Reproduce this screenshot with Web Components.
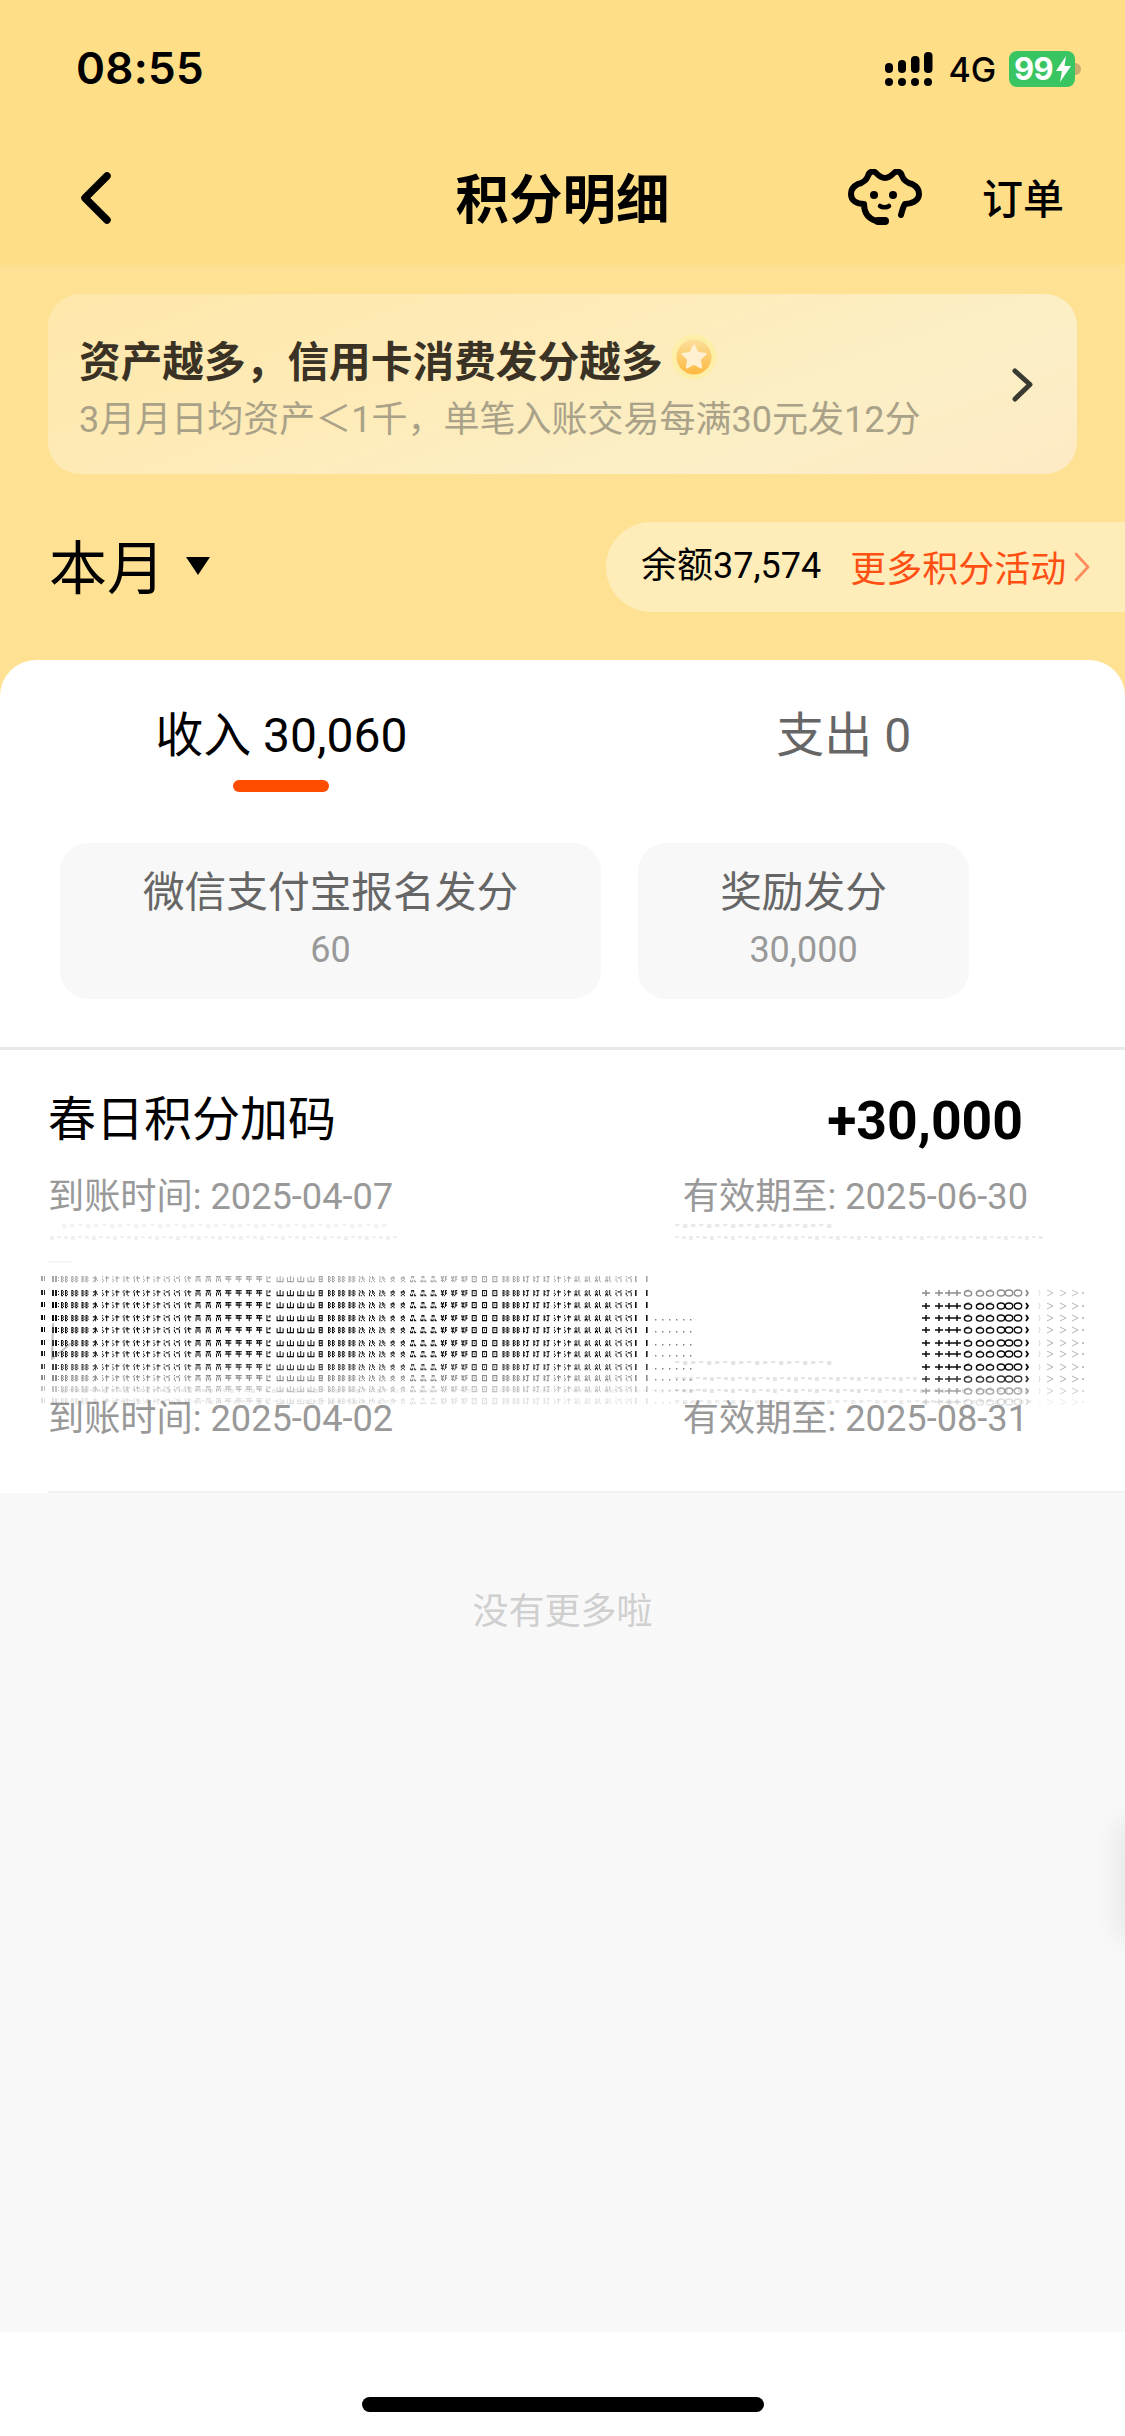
<!DOCTYPE html>
<html lang="zh-CN">
<head>
<meta charset="utf-8">
<title>积分明细</title>
<style>
html,body{margin:0;padding:0;background:#f8f8f8}
body{font-family:Roboto,"Noto Sans CJK SC",sans-serif}
</style>
</head>
<body>
<points-app></points-app>
<script>
const FONT = 'Roboto,"Noto Sans CJK SC",sans-serif';
function def(name, css, html, init){
  customElements.define(name, class extends HTMLElement{
    constructor(){
      super();
      const r = this.attachShadow({mode:'open'});
      r.innerHTML = '<style>'+css+'</style>'+html;
      if(init) init(r,this);
    }
  });
}

def('status-bar',`
:host{display:flex;height:132px;box-sizing:border-box;padding:46px 44px 0 76px;align-items:flex-start;color:#000}
.t{font:600 44px/44px Inter,sans-serif;letter-spacing:.3px}
.r{margin-left:auto;display:flex;align-items:flex-start;margin-top:1px}
svg{display:block}
.sig{margin-top:5px;margin-right:15px}
.g{font:500 34px/36px Inter,sans-serif;margin-top:5px;margin-right:13px;letter-spacing:-.1px}
.b{width:66px;height:36px;background:#39c562;border-radius:8px;display:flex;align-items:center;box-sizing:border-box;padding-left:5px;margin-top:4px}
.b span{font:700 31px/36px Inter,sans-serif;color:#fff;letter-spacing:-.6px}
.n{width:6px;height:12px;background:#c9ad6c;border-radius:0 6px 6px 0;margin-top:16px}
`,`
<div class="t">08:55</div>
<div class="r">
<svg class="sig" width="48" height="36" viewBox="0 0 48 36">
<g fill="#000">
<circle cx="4" cy="30" r="4"/><circle cx="17" cy="30" r="4"/><circle cx="30" cy="30" r="4"/><circle cx="43" cy="30" r="4"/>
<rect x="0" y="11" width="8" height="10" rx="4"/><rect x="13" y="8" width="8" height="13" rx="4"/>
<rect x="26" y="4" width="8.5" height="17" rx="4"/><rect x="39" y="0" width="8.5" height="21" rx="4"/>
</g></svg>
<div class="g">4G</div>
<div class="b"><span>99</span>
<svg width="17" height="26" viewBox="0 0 17 26" style="margin-left:2px"><path d="M11 0 1 15h6L5 26 16 10H9.5z" fill="#fff"/></svg>
</div>
<div class="n"></div>
</div>`);

def('nav-bar',`
:host{display:grid;grid-template-columns:1fr auto 1fr;height:133px;align-items:center;color:#000}
.l{padding-left:76px;display:flex}
.c{font:700 53.500px/60px "Noto Sans CJK SC",sans-serif;margin-top:-5px}
.x{display:flex;align-items:center;justify-content:flex-end;padding-right:61px}
.o{font:500 41px/48px "Noto Sans CJK SC",sans-serif;margin-left:60px;margin-top:-5px}
svg{display:block}
`,`
<div class="l"><svg width="40" height="56" viewBox="0 0 40 56" fill="none"><path d="M31 6 9 28l22 22" stroke="#000" stroke-width="7.5" stroke-linecap="round" stroke-linejoin="round" transform="translate(0 -1)"/></svg></div>
<div class="c">积分明细</div>
<div class="x">
<svg width="74" height="58" viewBox="-1 -2 74 58" style="margin-top:-2px">
<g fill="none" stroke="#000" stroke-width="6" stroke-linecap="round" stroke-linejoin="round">
<path d="M52 44C53 40 54 36 56 33C62 33 70 30 70 23C70 18 67 15 63 13C58 12 55 10 53 5C52 1 48-1 45 2C42 5 39 7 36 7C33 7 30 5 27 2C24-1 20 1 19 5C17 10 14 12 9 13C5 15 2 18 2 23C2 30 8 33 15 33C15 40 18 47 27 50"/>
<path d="M31 35c2 1.800 7 1.800 9 0" stroke-width="4.500"/>
<path d="M29 50h7" stroke-width="8"/>
</g>
<circle cx="25" cy="24" r="4" fill="#000"/><circle cx="44" cy="24" r="4" fill="#000"/>
</svg>
<div class="o">订单</div>
</div>`);

def('promo-banner',`
:host{display:flex;margin:29px 48px 0;height:180px;box-sizing:border-box;padding:40px 0 0 31px;border-radius:32px;
background:linear-gradient(160deg,#fee7aa 0%,#feebb8 40%,#fbefc6 70%,#feeac4 100%);position:relative;color:#3a3325}
.m{flex:1;min-width:0}
.h{display:flex;align-items:center;height:50px;font:700 41.700px/50px "Noto Sans CJK SC",sans-serif;white-space:nowrap}
.h svg{margin-left:8px;margin-top:-4px;display:block}
.s{margin-top:11px;font:400 36px/50px Roboto,"Noto Sans CJK SC",sans-serif;color:#aaa288;white-space:nowrap}
.a{display:block;margin:33px 42px 0 0;align-self:flex-start}
`,`
<div class="m">
<div class="h"><span>资产越多&#xFF0C;信用卡消费发分越多</span>
<svg width="46" height="46" viewBox="0 0 46 46">
<defs><linearGradient id="cg" x1="0" y1="0" x2="0" y2="1"><stop offset="0" stop-color="#fbdf9a"/><stop offset="1" stop-color="#fdb83f"/></linearGradient></defs>
<circle cx="23" cy="23" r="22.500" fill="#fdeea8"/><circle cx="23" cy="23" r="17.500" fill="url(#cg)"/>
<path d="M23 11.500l3.600 7.300 8 1.100-5.800 5.600 1.400 8-7.200-3.800-7.200 3.800 1.400-8-5.800-5.600 8-1.100z" fill="#fff0d2" stroke="#fff0d2" stroke-width="2" stroke-linejoin="round"/>
</svg></div>
<div class="s">3月月日均资产＜1千&#xFF0C;单笔入账交易每满30元发12分</div>
</div>
<svg class="a" width="24" height="40" viewBox="0 0 24 40" fill="none"><path d="M4 4l15 13.500L4 32" stroke="#3a3a32" stroke-width="5" stroke-linecap="round" stroke-linejoin="round"/></svg>`);

def('balance-row',`
:host{display:flex;align-items:center;margin-top:48px;height:90px;color:#000}
.p{font:400 58px/70px "Noto Sans CJK SC",sans-serif;margin:-7px 0 0 49px}
.tri{width:0;height:0;border-left:12.500px solid transparent;border-right:12.500px solid transparent;border-top:18px solid #000;margin:0 0 3px 21px}
.pill{margin-left:auto;width:519px;height:90px;box-sizing:border-box;background:#feedb9;border-radius:45px 0 0 45px;display:flex;align-items:center;padding-left:35px;white-space:nowrap}
.b{font:400 36px/44px Roboto,"Noto Sans CJK SC",sans-serif;margin-top:-2px}
.o{font:400 36px/44px "Noto Sans CJK SC",sans-serif;color:#ff5014;margin:-2px 0 0 29px}
svg{display:block;margin-left:7px}
`,`
<div class="p">本月</div><div class="tri"></div>
<div class="pill"><span class="b">余额37,574</span><span class="o">更多积分活动</span>
<svg width="18" height="30" viewBox="0 0 18 30" fill="none"><path d="M3 2l12 13L3 28" stroke="#ff8a5c" stroke-width="2.600" stroke-linecap="round" stroke-linejoin="round"/></svg>
</div>`);

def('tab-item',`
:host{display:flex;flex-direction:column;align-items:center;padding-top:52px;height:132px;box-sizing:border-box;color:#666}
:host([active]){color:#000}
.t{font:400 48px/48px Roboto,"Noto Sans CJK SC",sans-serif;white-space:pre}
.u{width:96px;height:12px;border-radius:6px;margin-top:20px;background:transparent}
:host([active]) .u{background:#ff4d00}
`,`<div class="t"><slot></slot></div><div class="u"></div>`);

def('stat-chip',`
:host{display:block;flex:none;width:var(--w);height:156px;box-sizing:border-box;padding-top:22px;background:#f8f8f8;border-radius:28px;text-align:center}
.t{font:400 41.700px/48px "Noto Sans CJK SC",sans-serif;color:#666}
.v{font:400 36px/46px Roboto,sans-serif;color:#999;margin-top:14px}
`,`<div class="t"><slot name="t"></slot></div><div class="v"><slot name="v"></slot></div>`);

def('record-meta',`
:host{display:flex;justify-content:space-between;height:44px;padding:0 97px 0 48px;font:400 36.200px/44px Roboto,"Noto Sans CJK SC",sans-serif;color:#999;white-space:nowrap}
`,`<span><slot name="a"></slot></span><span><slot name="b"></slot></span>`);

def('record-head',`
:host{display:flex;justify-content:space-between;align-items:center;height:48px;padding:41px 102px 0 48px;color:#000}
.t{font:400 48px/48px "Noto Sans CJK SC",sans-serif}
.v{font:700 53.500px/60px Roboto,sans-serif;margin-top:12px}
`,`<span class="t"><slot name="t"></slot></span><span class="v"><slot name="v"></slot></span>`);

/* The smeared, re-sampled band of the second record */
def('glitch-band',`
:host{display:block;height:179px;position:relative}
svg{position:absolute;left:0;top:0;z-index:1;filter:blur(.35px);pointer-events:none}
`,`<svg width="1125" height="200" viewBox="0 1218 1125 200"></svg>`,(r)=>{
  const T={
    box:["110011000","101010100","110011000","101010100","110011000"],
    cai:["000100000","011110000","000110000","001101000","010100000"],
    zhi:["100010000","000111100","100010000","010010000","100010000"],
    fu:["010010000","100111100","010010000","010010000","010001000"],
    ji:["100001000","001110000","100001000","100001000","010001000"],
    er:["011111000","001010000","010101000","010101000","010001000"],
    ping:["111111000","010100000","111111000","000100000","000100000"],
    l:["100100000","101100000","100000000","100000000","111100000"],
    shan:["000100000","100100100","100100100","100100100","111111100"],
    ri:["011110000","010010000","011110000","010010000","011110000"],
    zhi2:["100100000","010110000","100101000","100010000","101001000"],
    wen:["000100000","011110000","010010000","001100000","010010000"],
    pin:["011100000","010100000","000000000","101010000","111011000"],
    bang:["101011000","111010000","010011000","111010000","010100000"],
    tu:["111110000","100010000","101010000","100010000","111110000"],
    ding:["100111000","110010000","100010000","110010000","100110000"],
    zhi3:["010010000","101010000","010010000","111010000","101001000"]
  };
  const seq=[];
  const add=(k,n)=>{for(let i=0;i<n;i++)seq.push(k)};
  add('box',3);add('cai',1);add('zhi',2);add('fu',2);add('zhi',2);add('ji',2);add('fu',1);add('er',3);
  add('ping',4);add('l',1);add('shan',4);add('ri',1);add('box',3);add('zhi2',3);add('wen',2);add('pin',3);
  add('bang',3);add('tu',3);add('box',2);add('ding',3);add('zhi',2);add('zhi3',4);add('ji',2);
  const rows=[[1278,.35],[1292,.88],[1304,.95],[1317,.95],[1329,.95],[1342,.92],[1353,.9],[1366,.75],[1377,.45],[1388,.24],[1400,.12]];
  const rect=(x,y,w,h)=>`M${x} ${y}h${w}v${h}h-${w}z`;
  let out='';
  const P=(d,o,c)=>`<path d="${d}" fill="${c||'#000'}" opacity="${o}"/>`;
  rows.forEach(([y,o],ri)=>{
    let d=rect(41,y-3,2,5)+rect(44,y-3,1,5);
    d+=rect(52,y-3,2,6)+rect(55,y-3,2,6)+rect(58,y-2,1,1)+rect(58,y+1,1,1);
    seq.forEach((k,i)=>{
      const x0=61+i*(575/seq.length);
      T[k].forEach((line,ly)=>{
        for(let c=0;c<line.length;c++){ if(line[c]==='1'){ d+=rect((x0+c*1).toFixed(1),y-3+ly*1.25,1.05,1.25); } }
      });
    });
    d+=rect(635,y-3,1.6,6)+rect(646,y-3,1.6,6);
    out+=P(d,o);
    if(ri>=3){
      let f='';for(let x=655;x<692;x+=7){f+=rect(x,y+1,1.4,1.4)}
      out+=P(f,Math.min(o,.5));
    }
  });
  /* right column: + + ++ 6 6 6 0 0 ) > > > */
  const rr=[[1292,.45],[1305,.95],[1317,.95],[1329,.95],[1342,.95],[1353,.95],[1366,.95],[1378,.8],[1390,.35],[1401,.12]];
  rr.forEach(([y,o],i)=>{
    let s='';
    [926,939,949,957].forEach(x=>{s+=`<path d="M${x-4} ${y}h8M${x} ${y-3}v6" stroke="#000" stroke-width="1.500" fill="none"/>`});
    [968,980,990].forEach(x=>{s+=`<ellipse cx="${x}" cy="${y+.5}" rx="3.600" ry="2.600" stroke="#000" stroke-width="1.400" fill="none"/><path d="M${x-3.500} ${y}q1-3 5-3" stroke="#000" stroke-width="1.200" fill="none"/>`});
    [1001,1009,1018].forEach(x=>{s+=`<ellipse cx="${x}" cy="${y}" rx="3.700" ry="3" stroke="#000" stroke-width="1.400" fill="none"/>`});
    s+=`<path d="M1026 ${y-3}l2 3-2 3" stroke="#000" stroke-width="1.800" fill="none"/>`;
    let g='';
    [1050,1063,1075].forEach(x=>{g+=`<path d="M${x-3} ${y-3}l6 3-6 3" stroke="#777" stroke-width="1" fill="none"/>`});
    g+=`<circle cx="1083" cy="${y}" r="1.100" fill="#777"/><path d="M1039 ${y-3}l1 3-1 3" stroke="#bbb" stroke-width="1" fill="none"/>`;
    out+=`<g opacity="${o}">${s}</g><g opacity="${Math.min(o,.55)}">${g}</g>`;
  });
  /* faint date residue */
  const faint=(y,a,b,o,step)=>{let d='';for(let x=a;x<b;x+=step){d+=rect(x,y-2,step*.55,2+(x%3))}return P(d,o,'#888')};
  out+=faint(1225,62,390,.1,8)+faint(1237,50,395,.13,7)+faint(1225,675,830,.18,8)+faint(1237,675,1042,.16,7);
  out+=`<rect x="48" y="1260" width="24" height="1.500" fill="#f1f1f1"/>`;
  out+=faint(1362,675,835,.22,8)+faint(1378,675,920,.22,7)+faint(1390,675,1030,.24,7)+faint(1401,675,1030,.16,8);
  out+=faint(1390,62,395,.16,7)+faint(1401,105,395,.12,8)+faint(1390,395,700,.08,8);
  out+=`<path d="M53 1323l-1 34M52 1358l18-15" stroke="#777" stroke-width="2" stroke-linecap="round" fill="none" opacity=".45"/>`;
  r.querySelector('svg').innerHTML=out;
});

def('points-sheet',`
:host{display:block;background:#fff;border-radius:36px 36px 0 0;margin-top:48px}
.tabs{display:grid;grid-template-columns:1fr 1fr}
.chips{display:flex;gap:37px;padding-left:60px;margin-top:51px}
.div{height:3px;background:#e9e9e9;margin-top:48px}
.end{height:2px;background:#f1f1f1;margin:50px 0 0 48px}
`,`
<div class="tabs"><slot name="tabs"></slot></div>
<div class="chips"><slot name="chips"></slot></div>
<div class="div"></div>
<slot name="records"></slot>
<div class="end"></div>`);

def('edge-handle',`
:host{position:absolute;right:-24px;top:1825px;width:24px;height:110px;border-radius:12px;background:#eee;box-shadow:0 0 26px 8px rgba(0,0,0,.07)}
`,``);

def('points-app',`
:host{display:flex;flex-direction:column;width:1125px;height:2436px;overflow:hidden;position:relative;
background:linear-gradient(#fee192 0 720px,#f8f8f8 720px);font-family:${FONT}}
.top{background:#ffde88}
.fill{flex:1;text-align:center;padding-top:93px;font:400 36px/44px "Noto Sans CJK SC",sans-serif;color:#cfcfcf;background:#f8f8f8}
.home{height:104px;background:#fff;box-sizing:border-box;padding-top:65px;display:flex;justify-content:center}
.bar{width:402px;height:15px;border-radius:7.500px;background:#000}
`,`
<div class="top"><status-bar></status-bar><nav-bar></nav-bar></div>
<promo-banner></promo-banner>
<balance-row></balance-row>
<points-sheet>
  <tab-item slot="tabs" active>收入 30,060</tab-item>
  <tab-item slot="tabs">支出 0</tab-item>
  <stat-chip slot="chips" style="--w:541px"><span slot="t">微信支付宝报名发分</span><span slot="v">60</span></stat-chip>
  <stat-chip slot="chips" style="--w:331px"><span slot="t">奖励发分</span><span slot="v">30,000</span></stat-chip>
  <record-head slot="records"><span slot="t">春日积分加码</span><span slot="v">+30,000</span></record-head>
  <record-meta slot="records" style="margin-top:36px"><span slot="a">到账时间: 2025-04-07</span><span slot="b">有效期至: 2025-06-30</span></record-meta>
  <glitch-band slot="records" style="height:178px"></glitch-band>
  <record-meta slot="records"><span slot="a">到账时间: 2025-04-02</span><span slot="b">有效期至: 2025-08-31</span></record-meta>
</points-sheet>
<div class="fill">没有更多啦</div>
<div class="home"><div class="bar"></div></div>
<edge-handle></edge-handle>`);
</script>
</body>
</html>
